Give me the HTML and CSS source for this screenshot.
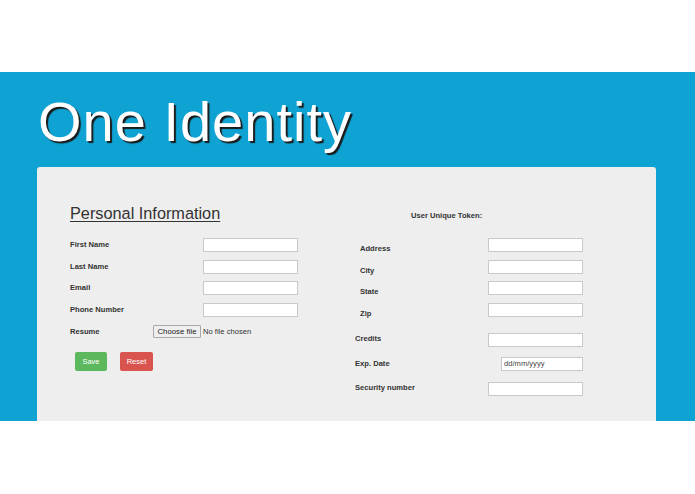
FILE: index.html
```html
<!DOCTYPE html>
<html>
<head>
<meta charset="utf-8">
<link rel="stylesheet" href="styles.css">
</head>
<body>
<div class="band">
  <h1 class="title">One Identity</h1>
  <div class="card">
    <div class="col-left">
      <h2 class="section">Personal Information</h2>
      <div class="rows">
        <div class="row"><span class="lbl">First Name</span><span class="inp"></span></div>
        <div class="row"><span class="lbl">Last Name</span><span class="inp"></span></div>
        <div class="row"><span class="lbl">Email</span><span class="inp"></span></div>
        <div class="row"><span class="lbl">Phone Number</span><span class="inp"></span></div>
        <div class="row"><span class="lbl lbl-short">Resume</span><span class="filebtn">Choose file</span><span class="filetxt">No file chosen</span></div>
      </div>
      <div class="actions">
        <span class="btn btn-save">Save</span>
        <span class="btn btn-reset">Reset</span>
      </div>
    </div>
    <div class="col-right">
      <div class="token">User Unique Token:</div>
      <div class="rows">
        <div class="row"><span class="lbl lbl-addr">Address</span><span class="inp"></span></div>
        <div class="row"><span class="lbl lbl-addr">City</span><span class="inp"></span></div>
        <div class="row"><span class="lbl lbl-addr">State</span><span class="inp"></span></div>
        <div class="row"><span class="lbl lbl-addr">Zip</span><span class="inp"></span></div>
      </div>
      <div class="rows2">
        <div class="row r-credits"><span class="lbl lbl-up">Credits</span><span class="inp"></span></div>
        <div class="row r-date"><span class="lbl lbl-date">Exp. Date</span><span class="inp inp-date">dd/mm/yyyy</span></div>
        <div class="row r-sec"><span class="lbl lbl-up">Security number</span><span class="inp"></span></div>
      </div>
    </div>
  </div>
</div>
</body>
</html>
```
FILE: styles.css
```css
html, body {
  margin: 0;
  padding: 0;
  background: #ffffff;
  font-family: "Liberation Sans", Arial, sans-serif;
}
.band {
  margin-top: 72px;
  height: 349px;
  background: #0ea3d3;
  overflow: hidden;
}
.title {
  margin: 0;
  padding: 4px 0 0 38px;
  height: 91px;
  line-height: 91px;
  font-size: 56px;
  letter-spacing: 1px;
  font-weight: normal;
  color: #ffffff;
  text-shadow: 2px 2px 1px #1a1a1a;
}
.card {
  margin-left: 37px;
  width: 619px;
  height: 300px;
  background: #eeeeee;
  border-radius: 3px 3px 0 0;
  padding: 36px 0 0 33px;
  box-sizing: border-box;
  display: flex;
}
.col-left {
  width: 285px;
}
.section {
  margin: 0;
  font-size: 16.3px;
  line-height: 20px;
  font-weight: normal;
  color: #333333;
  text-decoration: underline;
  text-underline-offset: 2px;
  text-decoration-thickness: 1px;
}
.rows {
  margin-top: 15px;
  display: flex;
  flex-direction: column;
  gap: 7.7px;
}
.row {
  display: flex;
  align-items: center;
  height: 14px;
}
.lbl {
  width: 133px;
  flex: none;
  font-size: 7.6px;
  font-weight: bold;
  color: #333333;
  line-height: 10px;
}
.lbl-short {
  width: 83px;
}
.inp {
  width: 95px;
  height: 14px;
  box-sizing: border-box;
  background: #ffffff;
  border: 1px solid #c9c9c9;
  flex: none;
}
.filebtn {
  box-sizing: border-box;
  width: 48px;
  height: 13px;
  border: 1px solid #a9a9a9;
  background: #efefef;
  border-radius: 1px;
  font-size: 7.8px;
  line-height: 11px;
  text-align: center;
  color: #222222;
}
.filetxt {
  margin-left: 2px;
  font-size: 7.6px;
  color: #333333;
  line-height: 10px;
}
.actions {
  margin-top: 13.5px;
  padding-left: 5px;
  display: flex;
  gap: 13px;
}
.btn {
  height: 19px;
  line-height: 19px;
  border-radius: 2px;
  color: #ffffff;
  font-size: 7.5px;
  text-align: center;
}
.btn-save {
  width: 32px;
  background: #5cb85c;
}
.btn-reset {
  width: 33px;
  background: #d9534f;
}
.col-right {
  width: 240px;
  padding-top: 8px;
}
.token {
  padding-left: 56px;
  font-size: 7.6px;
  font-weight: bold;
  color: #333333;
  line-height: 10px;
}
.col-right .rows {
  margin-top: 17px;
}
.lbl-addr {
  padding-left: 5px;
  padding-top: 8px;
  box-sizing: border-box;
}
.lbl-up {
  padding-bottom: 3px;
}
.lbl-date {
  width: 146px;
  padding-bottom: 1px;
}
.rows2 {
  display: flex;
  flex-direction: column;
}
.r-credits {
  margin-top: 16px;
}
.r-date {
  margin-top: 10px;
}
.r-sec {
  margin-top: 11px;
}
.inp-date {
  width: 82px;
  font-size: 7.6px;
  color: #444444;
  line-height: 12px;
  padding-left: 2px;
}
```
